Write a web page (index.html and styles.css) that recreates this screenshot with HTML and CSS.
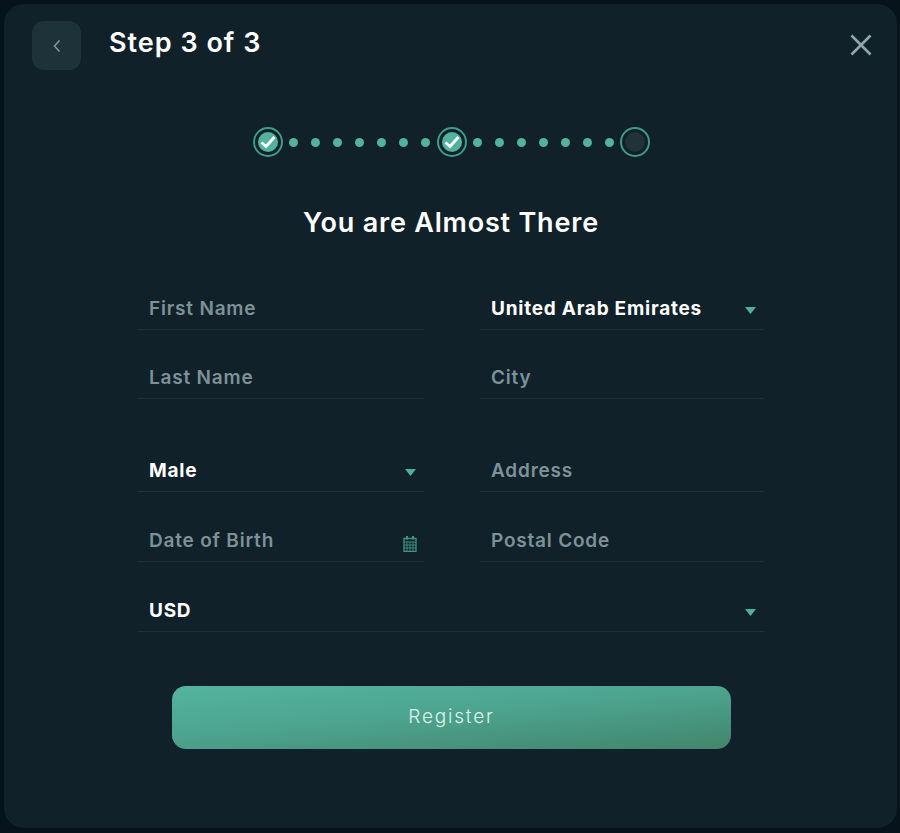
FILE: index.html
```html
<!DOCTYPE html>
<html lang="en">
<head>
<meta charset="utf-8">
<title>Step 3 of 3</title>
<link rel="stylesheet" href="styles.css">
</head>
<body>
<main class="modal">
  <header class="header">
    <button class="back" type="button" aria-label="Back">
      <svg width="10" height="14" viewBox="0 0 10 14"><path d="M7.5 1.5 2.5 7l5 5.5" fill="none" stroke="#7f979c" stroke-width="1.6"/></svg>
    </button>
    <h1 class="title">Step 3 of 3</h1>
    <button class="close" type="button" aria-label="Close">
      <svg width="24" height="24" viewBox="0 0 24 24"><path d="M2.5 2.5 21.500 21.500M21.500 2.500 2.500 21.500" fill="none" stroke="#8fa6ab" stroke-width="2.6"/></svg>
    </button>
  </header>

  <div class="stepper">
    <span class="step"><span class="step-fill"><svg width="16" height="14" viewBox="0 0 16 14"><path d="M1.500 7.500 6 11.500 14.500 2" fill="none" stroke="#fff" stroke-width="2.800"/></svg></span></span>
    <span class="dots"><i class="dot"></i><i class="dot"></i><i class="dot"></i><i class="dot"></i><i class="dot"></i><i class="dot"></i><i class="dot"></i></span>
    <span class="step"><span class="step-fill"><svg width="16" height="14" viewBox="0 0 16 14"><path d="M1.500 7.500 6 11.500 14.500 2" fill="none" stroke="#fff" stroke-width="2.800"/></svg></span></span>
    <span class="dots"><i class="dot"></i><i class="dot"></i><i class="dot"></i><i class="dot"></i><i class="dot"></i><i class="dot"></i><i class="dot"></i></span>
    <span class="step"><span class="step-fill step-todo"></span></span>
  </div>

  <h2 class="heading">You are Almost There</h2>

  <form class="form">
    <div class="grid">
      <div class="field muted">First Name</div>
      <div class="field value">United Arab Emirates<svg class="caret" width="11" height="7" viewBox="0 0 11 7"><path d="M0 0h11L5.500 7z"/></svg></div>
      <div class="field muted">Last Name</div>
      <div class="field muted">City</div>
    </div>
    <div class="grid grid-tall">
      <div class="field value">Male<svg class="caret" width="11" height="7" viewBox="0 0 11 7"><path d="M0 0h11L5.500 7z"/></svg></div>
      <div class="field muted">Address</div>
      <div class="field muted">Date of Birth
        <svg class="calendar" width="14" height="17" viewBox="0 0 14 17"><path d="M1 3.500h12v13H1z" fill="none" stroke="#3f9582" stroke-width="1.300"/><path d="M1 7h12M1 10h12M1 13h12M4 6.500v10M7 6.500v10M10 6.500v10" stroke="#3f9582" stroke-width=".9"/><path d="M3 1h2v3.500H3zM9 1h2v3.500H9z" fill="#3f9582"/></svg>
      </div>
      <div class="field muted">Postal Code</div>
      <div class="field value wide">USD<svg class="caret" width="11" height="7" viewBox="0 0 11 7"><path d="M0 0h11L5.500 7z"/></svg></div>
    </div>
    <button class="register" type="button">Register</button>
  </form>
</main>
</body>
</html>
```

FILE: styles.css
```css
* { box-sizing: border-box; }
html, body { height: 100%; }
body {
  margin: 0;
  padding: 4px 3px 5px 4px;
  background: #06131a;
  font-family: "Inter", "Liberation Sans", sans-serif;
}
h1, h2 { margin: 0; }
button { border: 0; padding: 0; background: none; font: inherit; }

.modal {
  height: 824px;
  background: #11212a;
  border-radius: 20px;
  padding: 17px 24px 0 28px;
}

.header { display: flex; align-items: flex-start; }
.back {
  width: 49px;
  height: 49px;
  border-radius: 12px;
  background: #1e3239;
  display: flex;
  align-items: center;
  justify-content: center;
}
.title {
  margin: 5px 0 0 28px;
  color: #fff;
  font-size: 27px;
  line-height: 34px;
  font-weight: 600;
  letter-spacing: 1px;
}
.close { margin: 12px 0 0 auto; width: 24px; height: 24px; display: block; }

.stepper {
  width: 397px;
  margin: 57px 0 0 221px;
  height: 30px;
  display: flex;
  align-items: center;
}
.step {
  flex: none;
  width: 30px;
  height: 30px;
  border: 2px solid #3f9b89;
  border-radius: 50%;
  display: flex;
  align-items: center;
  justify-content: center;
}
.step-fill {
  width: 20px;
  height: 20px;
  border-radius: 50%;
  background: #52b29c;
  display: flex;
  align-items: center;
  justify-content: center;
}
.step-todo { background: #213239; }
.dots {
  flex: 1;
  margin: 0 6px;
  display: flex;
  justify-content: space-between;
}
.dot { width: 9px; height: 9px; border-radius: 50%; background: #52b29c; }

.heading {
  margin: 49px 0 0;
  padding-right: 3px;
  text-align: center;
  color: #fff;
  font-size: 27px;
  line-height: 34px;
  font-weight: 600;
  letter-spacing: .8px;
}

.form { margin: 45px 0 0 106px; width: 626px; }
.grid {
  display: grid;
  grid-template-columns: 286px 284px;
  column-gap: 56px;
  row-gap: 24px;
}
.grid + .grid { margin-top: 48px; }
.grid-tall { row-gap: 25px; }
.field {
  height: 45px;
  padding: 11px 8px 0 11px;
  border-bottom: 1px solid #1c3038;
  font-size: 19px;
  line-height: 26px;
  font-weight: 600;
  letter-spacing: .8px;
  display: flex;
  justify-content: space-between;
  align-items: flex-start;
}
.muted { color: #7d9298; }
.value { color: #fff; font-weight: 700; letter-spacing: .75px; }
.wide { grid-column: 1 / -1; }
.caret { fill: #4fb09a; margin-top: 11px; }
.calendar { margin: 7px -1px 0 0; }

.register {
  display: block;
  width: 559px;
  height: 63px;
  margin: 54px 0 0 34px;
  padding-bottom: 2px;
  border-radius: 14px;
  background: linear-gradient(175deg, #54b49e 0%, #4da48f 45%, #42856b 100%);
  color: #dff3ec;
  font-size: 19px;
  letter-spacing: 1.8px;
  font-weight: 300;
  text-align: center;
}
```
